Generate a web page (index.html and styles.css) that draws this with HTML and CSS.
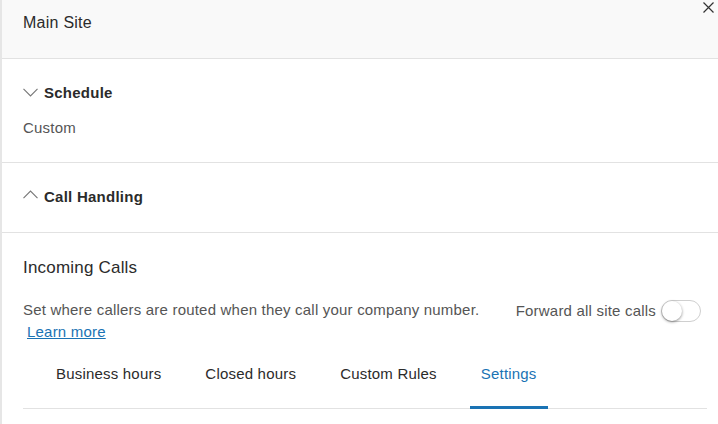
FILE: index.html
```html
<!DOCTYPE html>
<html lang="en">
<head>
<meta charset="utf-8">
<title>Main Site</title>
<link rel="stylesheet" href="styles.css">
</head>
<body>
<div class="panel">
  <header class="panel-header">
    <h1 class="site-title">Main Site</h1>
    <button class="close" aria-label="Close">
      <svg width="11" height="11" viewBox="0 0 11 11"><path d="M0.5 0.5 L10.5 10.5 M10.5 0.5 L0.5 10.5" stroke="#333" stroke-width="1.2" fill="none"/></svg>
    </button>
  </header>

  <section class="section schedule">
    <div class="section-title">
      <svg class="chev" width="15" height="9" viewBox="0 0 15 9"><path d="M0.5 0.8 L7.5 8 L14.5 0.8" stroke="#777" stroke-width="1.1" fill="none"/></svg>
      <span>Schedule</span>
    </div>
    <div class="section-value">Custom</div>
  </section>

  <section class="section handling">
    <div class="section-title">
      <svg class="chev" width="15" height="9" viewBox="0 0 15 9"><path d="M0.5 8.2 L7.5 1 L14.5 8.2" stroke="#777" stroke-width="1.1" fill="none"/></svg>
      <span>Call Handling</span>
    </div>
  </section>

  <section class="incoming">
    <h2 class="incoming-title">Incoming Calls</h2>
    <div class="incoming-row">
      <div class="incoming-desc">
        <p>Set where callers are routed when they call your company number.</p>
        <a href="#" class="learn">Learn more</a>
      </div>
      <label class="forward">
        <span>Forward all site calls</span>
        <span class="toggle"><span class="knob"></span></span>
      </label>
    </div>
    <nav class="tabs">
      <a class="tab">Business hours</a>
      <a class="tab">Closed hours</a>
      <a class="tab">Custom Rules</a>
      <a class="tab active">Settings</a>
    </nav>
  </section>
</div>
</body>
</html>
```

FILE: styles.css
```css
* { box-sizing: border-box; }
html, body { margin: 0; padding: 0; background: #fff; }
body {
  font-family: "Liberation Sans", Arial, Helvetica, sans-serif;
  color: #333;
  width: 718px;
  height: 424px;
  overflow: hidden;
}
.panel {
  border-left: 2px solid #e6e6e6;
  min-height: 424px;
}
.panel-header {
  position: relative;
  background: #f9f9f9;
  height: 59px;
  border-bottom: 1px solid #e2e2e2;
  padding: 13px 0 0 21px;
}
.site-title {
  margin: 0;
  font-size: 16px;
  line-height: 20px;
  letter-spacing: 0.25px;
  font-weight: normal;
  color: #2b2b2b;
}
.close {
  position: absolute;
  top: 2px;
  right: 4px;
  background: none;
  border: 0;
  padding: 0;
  width: 11px;
  height: 11px;
  cursor: pointer;
}
.close svg { display: block; }
.section {
  border-bottom: 1px solid #e2e2e2;
  padding: 23px 0 0 21px;
}
.schedule { height: 104px; }
.handling { height: 70px; }
.section-title {
  display: flex;
  align-items: center;
  height: 20px;
  font-size: 15px;
  letter-spacing: 0.25px;
  font-weight: bold;
  color: #2b2b2b;
}
.chev { margin-right: 6px; }
.schedule .chev { margin-top: 1px; }
.handling .chev { margin-top: -3px; }
.section-value {
  margin-top: 16px;
  font-size: 15px;
  letter-spacing: 0.2px;
  line-height: 20px;
  color: #555;
}
.incoming {
  padding: 25px 11px 0 21px;
}
.incoming-title {
  margin: 0;
  font-size: 17px;
  letter-spacing: 0.2px;
  line-height: 20px;
  font-weight: normal;
  color: #2b2b2b;
}
.incoming-row {
  display: flex;
  justify-content: space-between;
  align-items: flex-start;
  margin-top: 22px;
}
.incoming-desc p {
  margin: 0;
  font-size: 15px;
  letter-spacing: 0.2px;
  line-height: 20px;
  color: #555;
}
.learn {
  display: inline-block;
  margin: 2px 0 0 4px;
  font-size: 15px;
  letter-spacing: 0.2px;
  line-height: 20px;
  color: #1a73b4;
  text-decoration: underline;
}
.forward {
  display: flex;
  align-items: center;
  gap: 5px;
  font-size: 15px;
  letter-spacing: 0.2px;
  line-height: 20px;
  color: #555;
  margin-right: 6px;
}
.toggle {
  position: relative;
  width: 40px;
  height: 22px;
  border: 1px solid #cfcfcf;
  border-radius: 11px;
  background: #fff;
}
.knob {
  position: absolute;
  top: 0;
  left: 0;
  width: 20px;
  height: 20px;
  border-radius: 50%;
  background: #fff;
  box-shadow: 0 1px 3px rgba(0,0,0,0.45);
}
.tabs {
  display: flex;
  gap: 22px;
  margin-top: 22px;
  padding-left: 22px;
  border-bottom: 1px solid #e2e2e2;
}
.tab {
  font-size: 15px;
  letter-spacing: 0.2px;
  line-height: 20px;
  padding: 0 11px 22px;
  color: #2b2b2b;
  border-bottom: 3px solid transparent;
  margin-bottom: -1px;
}
.tab.active {
  color: #1a73b4;
  border-bottom-color: #1a73b4;
}
```
